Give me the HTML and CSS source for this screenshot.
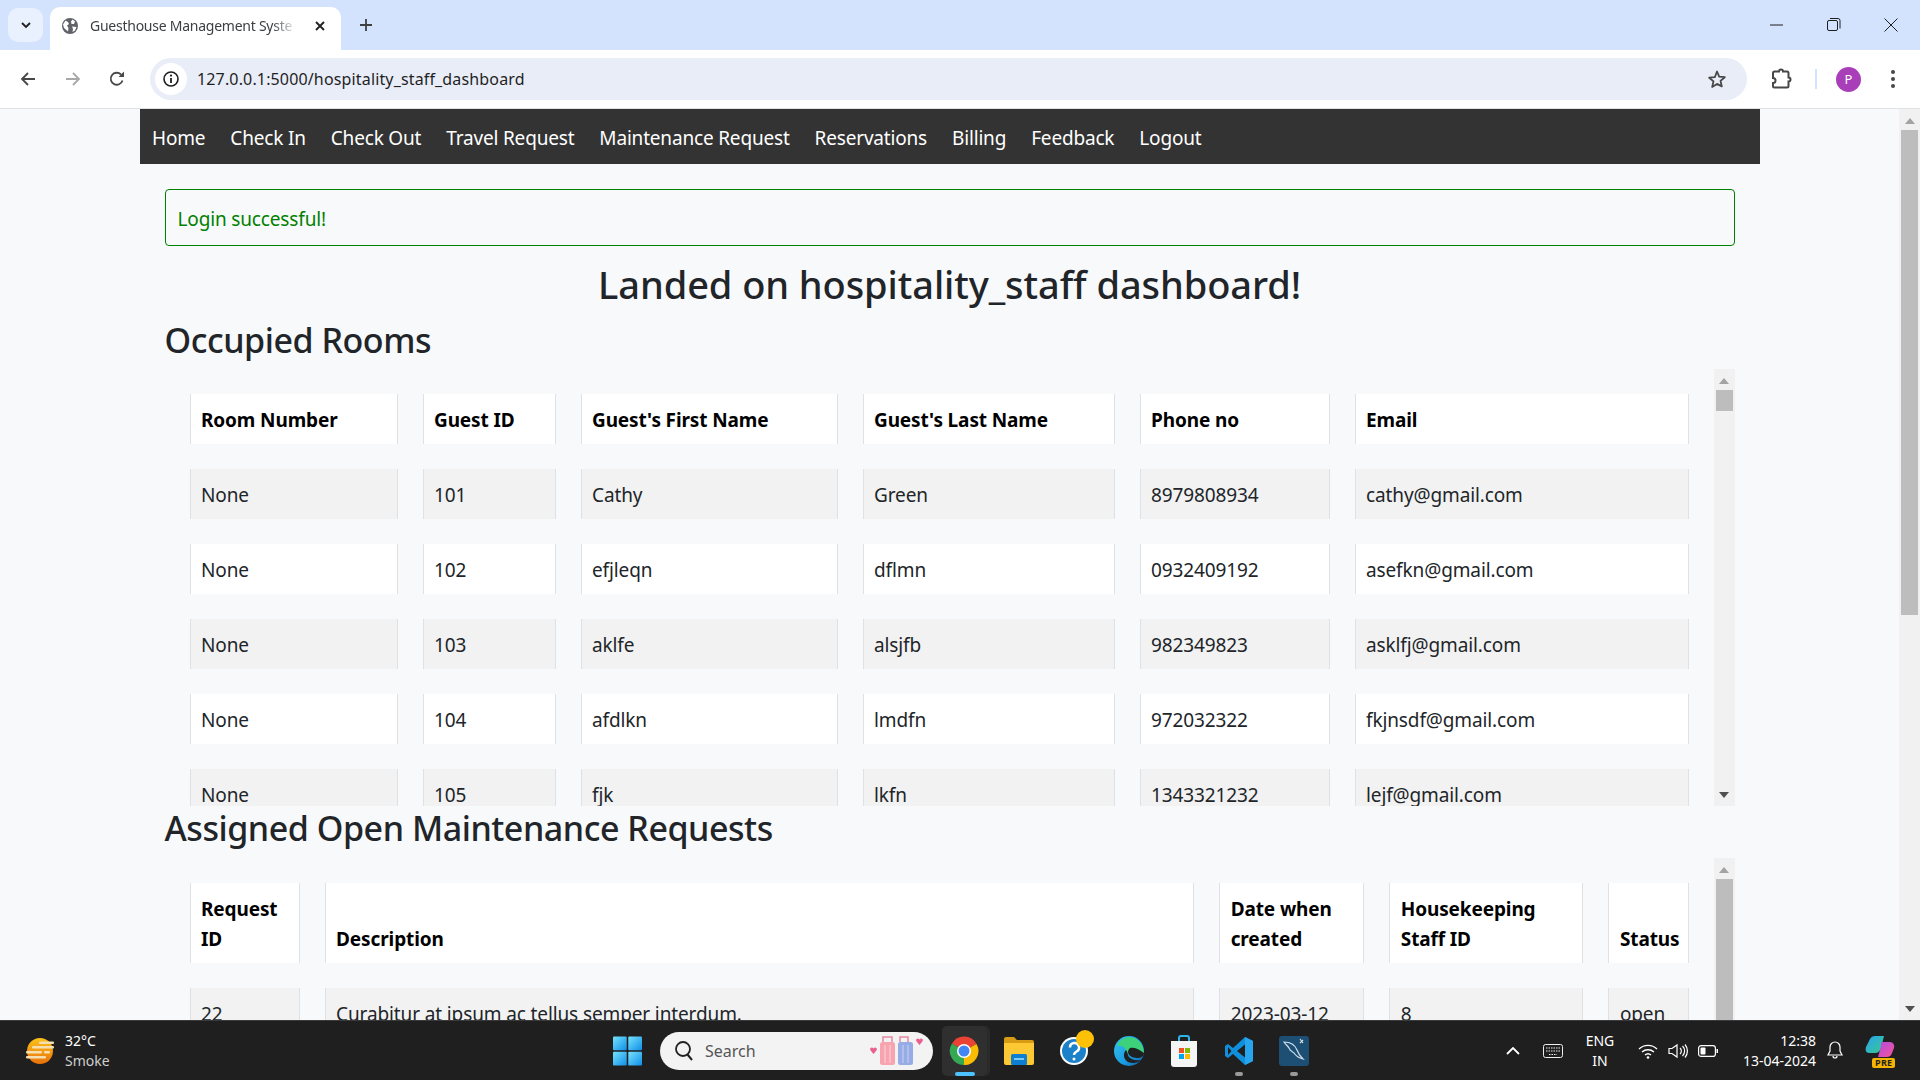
FILE: index.html
```html
<!DOCTYPE html>
<html lang="en">
<head>
<meta charset="utf-8">
<title>Guesthouse Management System</title>
<link rel="stylesheet" href="styles.css">
</head>
<body>
<header class="browser">
  <div class="tabstrip">
    <div class="tabsearch"><svg width="12" height="12" viewBox="0 0 12 12"><path d="M2 4l4 4 4-4" fill="none" stroke="#1f1f1f" stroke-width="1.8"/></svg></div>
    <div class="tab">
      <svg class="favicon" width="16" height="16" viewBox="0 0 16 16"><circle cx="8" cy="8" r="8" fill="#5f6368"/><path d="M3.500 2.500l2.500 1.500 1 2-2 1.500L6.500 10l-.5 3.500L2 10 1 6.500zM10.500 1.500l2.500 2-1 2.500h-2.500L9 3.500zM10 8.500l4.500.5-1.500 3.500L10.500 14l.5-3z" fill="#fff"/></svg>
      <span class="tabtitle">Guesthouse Management Syste</span>
      <svg class="tabclose" width="10" height="10" viewBox="0 0 10 10"><path d="M1 1l8 8M9 1L1 9" stroke="#1f1f1f" stroke-width="1.800"/></svg>
    </div>
    <svg class="newtab" width="14" height="14" viewBox="0 0 14 14"><path d="M7 1v12M1 7h12" stroke="#3c4043" stroke-width="1.800"/></svg>
    <div class="winctl">
      <svg width="14" height="14" viewBox="0 0 14 14"><path d="M0 7h13" stroke="#1f1f1f"/></svg>
      <svg width="14" height="14" viewBox="0 0 14 14"><rect x=".5" y="2.500" width="10" height="10" rx="1.500" fill="none" stroke="#1f1f1f"/><path d="M3 .5h8a2 2 0 0 1 2 2v8" fill="none" stroke="#1f1f1f"/></svg>
      <svg width="14" height="14" viewBox="0 0 14 14"><path d="M.5.5l13 13M13.500.5l-13 13" stroke="#1f1f1f"/></svg>
    </div>
  </div>
  <div class="toolbar">
    <svg class="nav-ic" width="16" height="16" viewBox="0 0 16 16"><path d="M15 8H2M8 2L2 8l6 6" fill="none" stroke="#474747" stroke-width="1.800"/></svg>
    <svg class="nav-ic" width="16" height="16" viewBox="0 0 16 16"><path d="M1 8h13M8 2l6 6-6 6" fill="none" stroke="#a8a8a8" stroke-width="1.800"/></svg>
    <svg class="nav-ic" width="16" height="16" viewBox="0 0 16 16"><path d="M13.500 9.500A6 6 0 1 1 12 3.500" fill="none" stroke="#474747" stroke-width="1.800"/><path d="M9.500 6h5.500V.5z" fill="#474747"/></svg>
    <div class="omnibox">
      <div class="siteinfo"><svg width="16" height="16" viewBox="0 0 16 16"><circle cx="8" cy="8" r="7" fill="none" stroke="#1f1f1f" stroke-width="1.600"/><path d="M8 7v5" stroke="#1f1f1f" stroke-width="1.800"/><circle cx="8" cy="4.600" r="1.100" fill="#1f1f1f"/></svg></div>
      <span class="url">127.0.0.1:5000/hospitality_staff_dashboard</span>
      <svg class="star" width="20" height="20" viewBox="0 0 20 20"><path d="M10 2.500l2.200 5.200 5.600.5-4.300 3.700 1.300 5.500L10 14.900l-4.800 3 1.300-5.500-4.300-3.700 5.600-.5z" fill="none" stroke="#474747" stroke-width="1.800" stroke-linejoin="round"/></svg>
    </div>
    <svg class="ext" width="22" height="22" viewBox="0 0 22 22"><path d="M9 3.500a2 2 0 0 1 4 0H17a1.500 1.500 0 0 1 1.500 1.500v4.500a2 2 0 0 1 0 4V18a1.500 1.500 0 0 1-1.500 1.500H4.500A1.500 1.500 0 0 1 3 18v-3a2.500 2.500 0 0 0 0-5V5a1.500 1.500 0 0 1 1.500-1.500z" fill="none" stroke="#474747" stroke-width="2"/></svg>
    <i class="tooldiv"></i>
    <span class="avatar">P</span>
    <svg class="menu" width="6" height="20" viewBox="0 0 6 20"><circle cx="3" cy="3" r="2" fill="#474747"/><circle cx="3" cy="10" r="2" fill="#474747"/><circle cx="3" cy="17" r="2" fill="#474747"/></svg>
  </div>
</header>

<div class="viewport">
  <main class="page">
    <nav class="navbar">
      <a>Home</a><a>Check In</a><a>Check Out</a><a>Travel Request</a><a>Maintenance Request</a><a>Reservations</a><a>Billing</a><a>Feedback</a><a>Logout</a>
    </nav>
    <div class="content">
      <div class="alert">Login successful!</div>
      <h1>Landed on hospitality_staff dashboard!</h1>
      <h2>Occupied Rooms</h2>
      <section class="panel">
        <div class="scroller">
          <table class="rooms">
            <colgroup><col class="r1"><col class="r2"><col class="r3"><col class="r4"><col class="r5"><col class="r6"></colgroup>
            <thead><tr><th>Room Number</th><th>Guest ID</th><th>Guest's First Name</th><th>Guest's Last Name</th><th>Phone no</th><th>Email</th></tr></thead>
            <tbody>
              <tr><td>None</td><td>101</td><td>Cathy</td><td>Green</td><td>8979808934</td><td>cathy@gmail.com</td></tr>
              <tr><td>None</td><td>102</td><td>efjleqn</td><td>dflmn</td><td>0932409192</td><td>asefkn@gmail.com</td></tr>
              <tr><td>None</td><td>103</td><td>aklfe</td><td>alsjfb</td><td>982349823</td><td>asklfj@gmail.com</td></tr>
              <tr><td>None</td><td>104</td><td>afdlkn</td><td>lmdfn</td><td>972032322</td><td>fkjnsdf@gmail.com</td></tr>
              <tr><td>None</td><td>105</td><td>fjk</td><td>lkfn</td><td>1343321232</td><td>lejf@gmail.com</td></tr>
            </tbody>
          </table>
        </div>
        <div class="sbar">
          <svg class="arrow" width="10" height="6" viewBox="0 0 10 6"><path d="M5 0l5 6H0z" fill="#a3a3a3"/></svg>
          <div class="thumb t-small"></div>
          <svg class="arrow down" width="10" height="6" viewBox="0 0 10 6"><path d="M0 0h10L5 6z" fill="#505050"/></svg>
        </div>
      </section>
      <h2 class="second">Assigned Open Maintenance Requests</h2>
      <section class="panel">
        <div class="scroller">
          <table class="reqs">
            <colgroup><col class="q1"><col class="q2"><col class="q3"><col class="q4"><col class="q5"></colgroup>
            <thead><tr><th>Request ID</th><th>Description</th><th>Date when created</th><th>Housekeeping Staff ID</th><th>Status</th></tr></thead>
            <tbody>
              <tr><td>22</td><td>Curabitur at ipsum ac tellus semper interdum.</td><td>2023-03-12</td><td>8</td><td>open</td></tr>
            </tbody>
          </table>
        </div>
        <div class="sbar">
          <svg class="arrow" width="10" height="6" viewBox="0 0 10 6"><path d="M5 0l5 6H0z" fill="#a3a3a3"/></svg>
          <div class="thumb t-big"></div>
        </div>
      </section>
    </div>
  </main>
  <div class="sbar pagebar">
    <svg class="arrow" width="10" height="6" viewBox="0 0 10 6"><path d="M5 0l5 6H0z" fill="#a3a3a3"/></svg>
    <div class="thumb t-page"></div>
    <svg class="arrow down" width="10" height="6" viewBox="0 0 10 6"><path d="M0 0h10L5 6z" fill="#505050"/></svg>
  </div>
</div>

<footer class="taskbar">
  <div class="weather">
    <svg width="30" height="28" viewBox="0 0 30 28"><defs><linearGradient id="sun" x1="0" y1="0" x2="0" y2="1"><stop offset="0" stop-color="#fcc21b"/><stop offset="1" stop-color="#e8710a"/></linearGradient></defs><circle cx="15" cy="14" r="13" fill="url(#sun)"/><g fill="#f6dfae"><rect x="14" y="4.500" width="15" height="2.500" rx="1"/><rect x="7" y="9" width="22" height="2.500" rx="1"/><rect x="1" y="14" width="16" height="2.500" rx="1"/><rect x="19" y="14" width="6" height="2.500" rx="1"/><rect x="1" y="19" width="20" height="2.500" rx="1"/></g></svg>
    <div class="wtext"><span>32°C</span><span class="wsub">Smoke</span></div>
  </div>
  <div class="tasks">
    <div class="task win"><svg width="30" height="30" viewBox="0 0 30 30"><defs><linearGradient id="wg" x1="0" y1="0" x2="1" y2="1"><stop offset="0" stop-color="#76e3fb"/><stop offset="1" stop-color="#0f8ee9"/></linearGradient></defs><rect x="0" y="0" width="14.200" height="14.200" rx="1" fill="url(#wg)"/><rect x="15.800" y="0" width="14.200" height="14.200" rx="1" fill="url(#wg)"/><rect x="0" y="15.800" width="14.200" height="14.200" rx="1" fill="url(#wg)"/><rect x="15.800" y="15.800" width="14.200" height="14.200" rx="1" fill="url(#wg)"/></svg></div>
    <div class="search">
      <svg width="20" height="22" viewBox="0 0 20 22"><circle cx="9" cy="9" r="7" fill="none" stroke="#222" stroke-width="1.800"/><path d="M13.500 14.500L18 20" stroke="#222" stroke-width="2"/></svg>
      <span class="searchtext">Search</span>
      <svg class="bags" width="54" height="30" viewBox="0 0 54 30"><path d="M1 15c-2.500-2.500 1-5 2.500-2.500C5 10 8.500 12.500 6 15l-2.500 3z" fill="#ea5f8f"/><path d="M47 6c-2.500-2.500 1-5 2.500-2.500C51 1 54.500 3.500 52 6l-2.500 3z" fill="#ea5f8f"/><path d="M13 6V1h9v5M30 6V1h8v5" fill="none" stroke="#e58aa2" stroke-width="1.500"/><rect x="10" y="6" width="15" height="23" rx="2.500" fill="#f7a3b0"/><rect x="28" y="6" width="15" height="23" rx="2.500" fill="#97abe4"/><path d="M15 9v18M20 9v18" stroke="#fbd3d9"/><path d="M33 9v18M38 9v18" stroke="#c8d3f5"/></svg>
    </div>
    <div class="icons">
      <div class="task active">
        <svg width="30" height="30" viewBox="0 0 30 30"><path d="M15 15L3 7.500A14 14 0 0 1 27.500 8z" fill="#ea4335"/><path d="M15 15L27.500 8A14 14 0 0 1 15 29z" fill="#fbbc04"/><path d="M15 15L15 29A14 14 0 0 1 3 7.500z" fill="#34a853"/><circle cx="15" cy="15" r="7" fill="#fff"/><circle cx="15" cy="15" r="5.500" fill="#4285f4"/></svg>
        <i class="bar-on"></i>
      </div>
      <div class="task">
        <svg width="30" height="28" viewBox="0 0 30 28"><path d="M0 2a2 2 0 0 1 2-2h8l3 3h15a2 2 0 0 1 2 2v3H0z" fill="#d79c13"/><path d="M0 6h30v20a2 2 0 0 1-2 2H2a2 2 0 0 1-2-2z" fill="#fcc934"/><rect x="7" y="17" width="16" height="11" rx="1.500" fill="#0c7fd3"/><rect x="10" y="21" width="10" height="2" fill="#7ccaf5"/></svg>
      </div>
      <div class="task">
        <svg class="help" width="36" height="36" viewBox="0 0 36 36"><circle cx="15" cy="21" r="14" fill="#fff"/><circle cx="15" cy="21" r="12" fill="#1b82c9"/><path d="M11 17.500a4.500 4.500 0 1 1 6.500 4c-1.500 1-2.500 1.500-2.500 3.500" fill="none" stroke="#fff" stroke-width="2.500"/><circle cx="15" cy="29" r="1.500" fill="#fff"/><circle cx="26" cy="9" r="9" fill="#ffc107"/></svg>
      </div>
      <div class="task">
        <svg width="30" height="30" viewBox="0 0 30 30"><defs><linearGradient id="eg" x1="0" y1="0" x2="1" y2="1"><stop offset="0" stop-color="#35c1f1"/><stop offset=".6" stop-color="#1b9de2"/><stop offset="1" stop-color="#0c59a4"/></linearGradient></defs><circle cx="15" cy="15" r="15" fill="url(#eg)"/><path d="M3 10C6 2 14 0 20 2c6 2 10 8 10 15H12c1-6-6-9-9-7z" fill="#3dd27a"/><path d="M30 17c0 3-3 5-7 5-5 0-9-3-9-6 0-2 1-3 2-4 3-1 8 0 14 5z" fill="#1f2020"/><path d="M12 14c-3 3-3 9 2 12 5 2 10 1 13-2-6 1-12-1-13-5-.6-2-.5-3-2-5z" fill="#1f2020"/></svg>
      </div>
      <div class="task">
        <svg width="26" height="32" viewBox="0 0 26 32"><path d="M8 7V3a2 2 0 0 1 2-2h6a2 2 0 0 1 2 2v4" fill="none" stroke="#2cb5e8" stroke-width="2"/><path d="M0 6h26v23a3 3 0 0 1-3 3H3a3 3 0 0 1-3-3z" fill="#f5f5f5"/><rect x="8" y="13" width="5" height="5" fill="#f25022"/><rect x="14" y="13" width="5" height="5" fill="#7fba00"/><rect x="8" y="19" width="5" height="5" fill="#00a4ef"/><rect x="14" y="19" width="5" height="5" fill="#ffb900"/></svg>
      </div>
      <div class="task">
        <svg width="30" height="30" viewBox="0 0 30 30"><path d="M21 1l8 4v20l-8 4L9 18l-5 4-3-2v-10l3-2 5 4z" fill="#0f8fdc"/><path d="M21 8.500L13 15l8 6.500z" fill="#1f2020"/><path d="M21 1l8 4v20l-8 4z" fill="#27a5ee"/><path d="M4 11l3.500 4L4 19z" fill="#1f2020"/></svg>
        <i class="bar-off"></i>
      </div>
      <div class="task">
        <svg width="30" height="30" viewBox="0 0 30 30"><rect width="30" height="30" rx="3" fill="#1d4f75"/><path d="M5 6c6 0 11 3 13 8 1 3 3 6 6 9-4-1-7-3-9-6-2-2-4-2-5-5C9 10 6 8 5 6zM21 3l3 4M24 4l-3 3" fill="none" stroke="#cfe0ea" stroke-width="1.200"/></svg>
        <i class="bar-off"></i>
      </div>
    </div>
  </div>
  <div class="tray">
    <svg class="tray-caret" width="14" height="8" viewBox="0 0 14 8"><path d="M1 7l6-6 6 6" fill="none" stroke="#fff" stroke-width="1.800"/></svg>
    <svg class="tray-kb" width="20" height="14" viewBox="0 0 20 14"><rect x=".5" y=".5" width="19" height="13" rx="2" fill="none" stroke="#eee"/><path d="M3 4h14M3 7h14M6 10.500h8" stroke="#eee" stroke-dasharray="1.500 1"/></svg>
    <div class="lang"><span>ENG</span><span>IN</span></div>
    <svg class="tray-wifi" width="20" height="16" viewBox="0 0 20 16"><path d="M1 6a13 13 0 0 1 18 0M4 9a9 9 0 0 1 12 0M7 12a4.500 4.500 0 0 1 6 0" fill="none" stroke="#fff" stroke-width="1.400"/><circle cx="10" cy="14.500" r="1.300" fill="#fff"/></svg>
    <svg class="tray-vol" width="20" height="16" viewBox="0 0 20 16"><path d="M1 5.500h3L9 2v12L4 10.500H1z" fill="none" stroke="#fff" stroke-width="1.200"/><path d="M12 5a4 4 0 0 1 0 6M14.500 3a7 7 0 0 1 0 10M17 1.500a10 10 0 0 1 0 13" fill="none" stroke="#fff" stroke-width="1.200"/></svg>
    <svg class="tray-bat" width="20" height="12" viewBox="0 0 20 12"><rect x=".6" y=".6" width="16.800" height="10.800" rx="2.500" fill="none" stroke="#fff" stroke-width="1.200"/><rect x="2.500" y="2.500" width="5" height="7" rx="1" fill="#fff"/><rect x="18.500" y="4" width="1.500" height="4" fill="#fff"/></svg>
    <div class="clock"><span>12:38</span><span>13-04-2024</span></div>
    <svg class="tray-bell" width="16" height="19" viewBox="0 0 16 19"><path d="M8 1a5 5 0 0 1 5 5v4l2 4H1l2-4V6a5 5 0 0 1 5-5zM6 15a2 2 0 0 0 4 0" fill="none" stroke="#fff" stroke-width="1.200"/></svg>
    <div class="copilot">
      <svg width="30" height="26" viewBox="0 0 30 26"><defs><linearGradient id="c1" x1="0" y1="0" x2="1" y2="1"><stop offset="0" stop-color="#2aa4f4"/><stop offset="1" stop-color="#37c98b"/></linearGradient><linearGradient id="c2" x1="0" y1="0" x2="1" y2="1"><stop offset="0" stop-color="#b04ce0"/><stop offset="1" stop-color="#f7549a"/></linearGradient></defs><path d="M10 2h9l-3 12c-1 3-3 5-6 5H4C1 19 0 16 1 13L5 5c1-2 3-3 5-3z" fill="url(#c1)"/><path d="M17 8h8c3 0 5 3 4 6l-2 5c-1 3-3 4-5 4h-9l3-11c0-2 0-4 1-4z" fill="url(#c2)"/></svg>
      <span class="pre">PRE</span>
    </div>
  </div>
</footer>
</body>
</html>
```

FILE: styles.css
```css
* { box-sizing: border-box; }
html, body { margin: 0; height: 100%; }
body {
  width: 1920px; height: 1080px; overflow: hidden;
  display: flex; flex-direction: column;
  font-family: "Noto Sans", "Open Sans", sans-serif;
  background: #f8f9fa; color: #212529;
}

/* browser chrome */
.browser { flex: none; height: 109px; border-bottom: 1px solid #dfe1e5; background: #fff; }
.tabstrip { height: 50px; background: #d3e3fd; display: flex; align-items: flex-start; padding: 8px 0 0 8px; position: relative; }
.tabsearch { width: 35px; height: 34px; background: #e9f0fe; border-radius: 10px; display: flex; align-items: center; justify-content: center; }
.tab { width: 291px; height: 43px; margin: -1px 0 0 7px; background: #fff; border-radius: 10px 10px 0 0; display: flex; align-items: center; padding: 0 16px 6px 12px; }
.favicon { flex: none; }
.tabtitle { flex: 1; margin-left: 12px; font-size: 14px; color: #3c4043; white-space: nowrap; overflow: hidden; letter-spacing: -.25px; -webkit-mask-image: linear-gradient(90deg, #000 88%, transparent); mask-image: linear-gradient(90deg, #000 88%, transparent); }
.tabclose { flex: none; margin-left: 18px; }
.newtab { margin: 10px 0 0 18px; }
.winctl { margin-left: auto; display: flex; gap: 43px; padding: 10px 22px 0 0; }
.toolbar { height: 58px; display: flex; align-items: center; padding: 0 0 0 20px; border-radius: 0; }
.nav-ic { flex: none; margin-right: 29px; }
.nav-ic:nth-of-type(3) { margin-right: 25px; margin-left: -1px; }
.omnibox { width: 1597px; height: 42px; border-radius: 21px; background: #e9edf8; display: flex; align-items: center; padding: 0 15px 0 5px; }
.siteinfo { width: 32px; height: 32px; border-radius: 50%; background: #fff; display: flex; align-items: center; justify-content: center; flex: none; }
.url { margin-left: 10px; font-size: 16px; color: #1f1f1f; flex: 1; letter-spacing: .15px; }
.star { flex: none; margin-right: 5px; }
.ext { flex: none; margin-left: 23px; }
.tooldiv { width: 2px; height: 20px; background: #d3e3fd; margin-left: 23px; flex: none; }
.avatar { width: 25px; height: 25px; border-radius: 50%; background: #a93fb8; color: #fff; font-size: 13px; text-align: center; line-height: 25px; margin-left: 19px; flex: none; }
.menu { flex: none; margin-left: 29px; }

/* page */
.viewport { flex: 1; min-height: 0; display: flex; overflow: hidden; }
.page { flex: 1; min-width: 0; overflow: hidden; }
.navbar { width: 1620px; height: 55px; margin: 0 auto; background: #333; display: flex; padding-top: 14px; }
.navbar a { padding: 0 12.5px; color: #fff; font-size: 19px; line-height: 30px; letter-spacing: -.18px; white-space: nowrap; }
.content { width: 1620px; margin: 0 auto; padding: 25px 25px 0; }
.alert { height: 57px; border: 1px solid #008000; border-radius: 4px; padding: 14px 12px 12px; color: #008000; font-size: 19px; line-height: 30px; letter-spacing: -.15px; margin-bottom: 14px; }
h1 { margin: 0 0 13px; text-align: center; font-size: 38px; line-height: 48px; font-weight: 500; letter-spacing: -.08px; }
h2 { margin: 0 0 10px; font-size: 34px; line-height: 38px; font-weight: 500; letter-spacing: -.45px; }
.panel { display: flex; height: 437px; margin-bottom: 3px; }
.scroller { flex: 1; min-width: 0; overflow: hidden; }
h2.second { margin-bottom: 11px; }
table { border-collapse: separate; border-spacing: 25px; table-layout: fixed; width: 1549px; font-size: 19px; line-height: 30px; letter-spacing: -.12px; }
th, td { padding: 11px 9.5px 9px 10.5px; background: #fff; border-left: 1px solid #dee2e6; border-right: 1px solid #dee2e6; text-align: left; }
th { font-weight: 700; color: #000; vertical-align: bottom; }
tbody tr:nth-child(odd) td { background: #f2f2f2; }
.r1 { width: 208px; } .r2 { width: 133px; } .r3 { width: 257px; } .r4 { width: 252px; } .r5 { width: 190px; } .r6 { width: 334px; }
.q1 { width: 110px; } .q2 { width: 869px; } .q3 { width: 145px; } .q4 { width: 194px; } .q5 { width: 80px; }

/* scrollbars */
.sbar { flex: none; width: 21px; background: #f1f1f1; display: flex; flex-direction: column; align-items: center; padding-top: 9px; }
.arrow { flex: none; margin-bottom: 6px; }
.arrow.down { margin: auto 0 8px; }
.thumb { flex: none; width: 17px; background: #bdbdbd; }
.t-small { height: 21px; }
.t-big { height: 300px; }
.pagebar { height: 100%; }
.t-page { height: 485px; }

/* taskbar */
.taskbar { flex: none; height: 60px; background: #1f1f1f; border-top: 1px solid #3a3a3a; display: flex; align-items: center; color: #fff; position: relative; }
.weather { display: flex; align-items: center; width: 613px; padding-left: 25px; gap: 10px; flex: none; }
.wtext { display: flex; flex-direction: column; font-size: 14px; line-height: 20px; }
.wsub { color: #cfcfcf; }
.tasks { display: flex; align-items: center; flex: none; }
.task { width: 45px; height: 50px; display: flex; align-items: center; justify-content: center; position: relative; flex: none; }
.task.win { width: 29px; margin-right: 18px; }
.search { width: 273px; height: 38px; border-radius: 19px; background: #f3f3f3; display: flex; align-items: center; padding-left: 14px; position: relative; }
.searchtext { margin-left: 11px; color: #555; font-size: 16px; }
.bags { position: absolute; right: 9px; top: 4px; }
.icons { display: flex; gap: 10px; margin-left: 8.5px; }
.task.active { background: #2f2f2f; border-radius: 5px; box-shadow: 3px 0 0 #2a2a2a; }
.help { margin: -6px -3px 0 3px; }
.bar-on { position: absolute; left: 13px; bottom: 0; width: 20px; height: 4px; border-radius: 2px; background: #4cc2ff; }
.bar-off { position: absolute; left: 18px; bottom: 0; width: 8px; height: 4px; border-radius: 2px; background: #9a9a9a; }
.tray { position: absolute; left: 1506px; top: 0; height: 59px; width: 414px; display: flex; align-items: center; font-size: 14px; }
.tray-caret { flex: none; }
.tray-kb { flex: none; margin-left: 23px; }
.lang { width: 50px; margin-left: 12px; display: flex; flex-direction: column; align-items: center; line-height: 20px; }
.tray-wifi { flex: none; margin-left: 13px; }
.tray-vol { flex: none; margin-left: 10px; }
.tray-bat { flex: none; margin-left: 10px; }
.clock { display: flex; flex-direction: column; align-items: flex-end; line-height: 20px; width: 98px; flex: none; }
.tray-bell { flex: none; margin-left: 11px; }
.copilot { position: relative; margin-left: 22px; width: 30px; height: 34px; }
.pre { position: absolute; left: 7px; bottom: 0; background: #f5b400; color: #1f1f1f; font-size: 9px; line-height: 10px; font-weight: 700; padding: 0 3px; border-radius: 2px; letter-spacing: .3px; }
```
